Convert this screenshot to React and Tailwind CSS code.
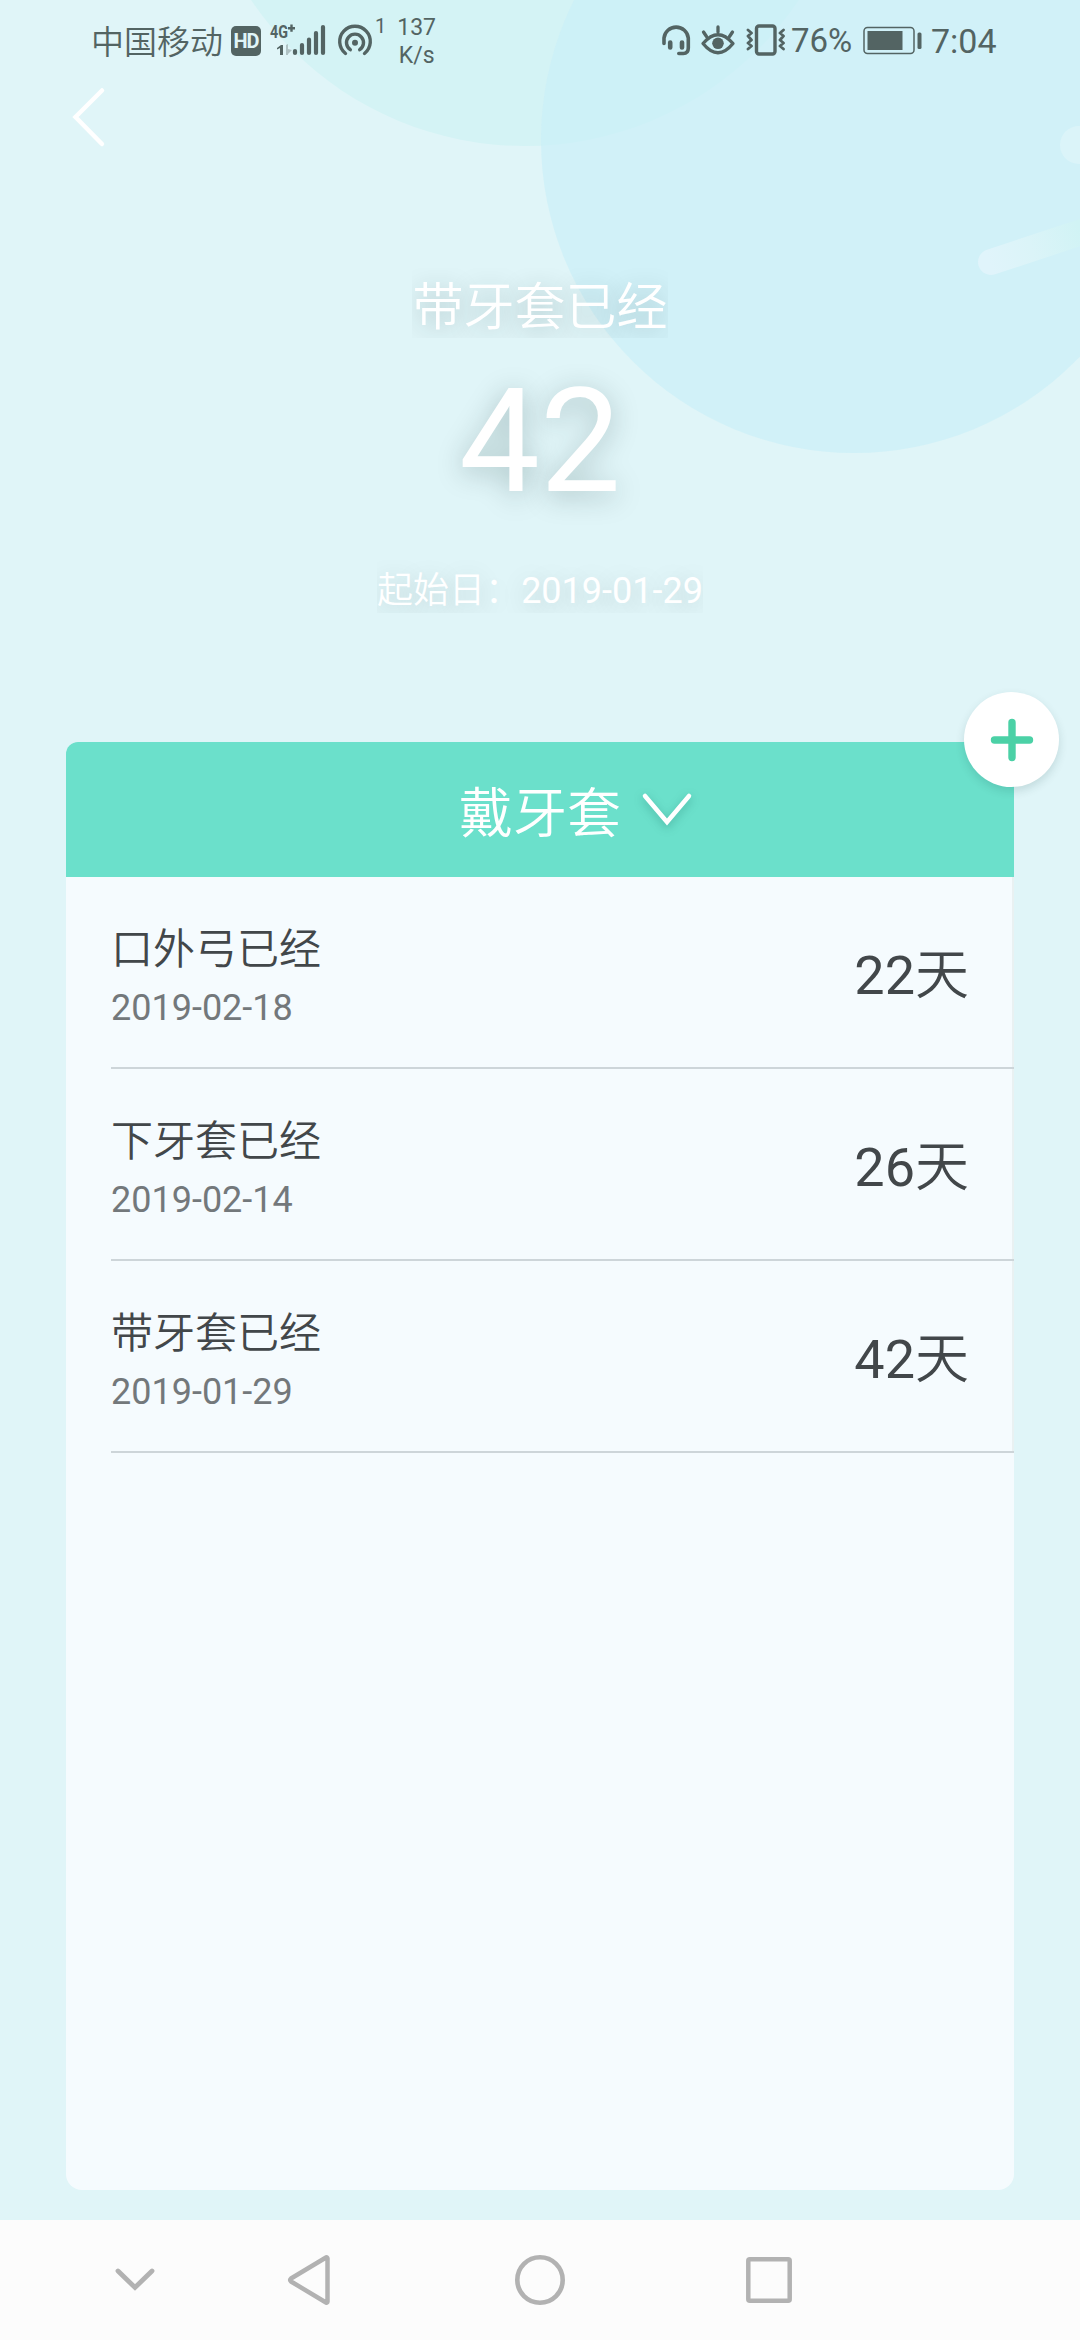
import React, { useState } from "react";

const records = [
  { id: 1, title: "口外弓已经", date: "2019-02-18", days: 22 },
  { id: 2, title: "下牙套已经", date: "2019-02-14", days: 26 },
  { id: 3, title: "带牙套已经", date: "2019-01-29", days: 42 },
];

function Background() {
  return (
    <svg className="absolute inset-0 -z-10" width="1080" height="700" viewBox="0 0 1080 700" fill="none">
      <defs>
        <linearGradient id="streak" gradientUnits="userSpaceOnUse" x1="989" y1="261" x2="1080" y2="230">
          <stop offset="0" stopColor="#e0f4fb" />
          <stop offset="0.45" stopColor="#dbf4f8" />
          <stop offset="1" stopColor="#d1f3f5" />
        </linearGradient>
      </defs>
      <circle cx="525" cy="-184" r="330" fill="#d4f3f5" />
      <circle cx="854" cy="140" r="313" fill="#caf0f8" fillOpacity="0.7" />
      <path d="M991 262L1100 226" stroke="url(#streak)" strokeWidth="26" strokeLinecap="round" />
      <circle cx="1079" cy="145" r="19" fill="#dbf4f9" />
    </svg>
  );
}

function StatusBar() {
  return (
    <div className="flex h-20 justify-between pl-[91px] pr-[83px] text-[#536463]">
      <div className="flex">
        <span className="pt-[19px] text-[33px] leading-[48px] font-[350]">中国移动</span>
        <span className="mt-[26px] ml-[8px] flex h-[30px] w-[30px] items-center justify-center rounded-[5px] bg-[#536463] text-[20px] leading-none font-bold tracking-[-1px] text-[#e0f5f8]">
          HD
        </span>
        <svg className="mt-[22px] ml-[8px]" width="58" height="36" viewBox="0 0 58 36" fill="currentColor">
          <text x="1" y="16" fontSize="18" fontWeight="700" textLength="18" lengthAdjust="spacingAndGlyphs">4G</text>
          <path d="M19 5h7v2.400h-7zM21.300 2.500h2.400v7.200h-2.400z" />
          <path d="M8 26l4-3h2v10h-3v-7l-3 1.500z" />
          <path d="M17 23l2-1v11h-2zM19 27l4 1-4 4z" opacity="0.35" />
          <path d="M26 29v2M33 23v8M40 17.500v13.500M47 11v20M54 5v26" stroke="currentColor" strokeWidth="4.200" strokeLinecap="round" />
        </svg>
        <svg className="mt-[23px] ml-[9px]" width="38" height="36" viewBox="0 0 38 36" fill="none" stroke="currentColor" strokeWidth="3.400" strokeLinecap="round">
          <path d="M9.500 30.500a15.300 15.300 0 1 1 19 0" />
          <path d="M14.300 26.700a8.500 8.500 0 1 1 9.400 0" />
          <circle cx="19" cy="19.700" r="3" fill="currentColor" stroke="none" />
        </svg>
        <span className="ml-[1px] pt-[14px] text-[20px] leading-6">1</span>
        <div className="ml-[11px] flex flex-col pt-[14px] text-center text-[23px] leading-[28px]">
          <span>137</span>
          <span>K/s</span>
        </div>
      </div>
      <div className="flex">
        <svg className="mt-[23px]" width="32" height="34" viewBox="0 0 32 34" fill="none" stroke="currentColor" strokeWidth="3.600" strokeLinecap="round">
          <path d="M4 20.500v-5.500a12.200 12 0 0 1 24.300 0v10q0 5.500-5 5.500h-4.500" />
          <path d="M10.200 19.500v5M22 19.500v5" strokeWidth="4.600" />
        </svg>
        <svg className="mt-[23px] ml-[8px]" width="36" height="34" viewBox="0 0 36 34" fill="none" stroke="currentColor" strokeWidth="3.300" strokeLinecap="round" strokeLinejoin="round">
          <path d="M3 20.500Q18 3 33 20.500Q18 39 3 20.500zM18 4v5M3.500 9l3 4.500M32.500 9l-3 4.500" />
          <circle cx="18" cy="20.300" r="5.800" fill="currentColor" stroke="none" />
        </svg>
        <svg className="mt-[22px] ml-[8px]" width="44" height="36" viewBox="0 0 44 36" fill="none" stroke="currentColor" strokeWidth="3.400" strokeLinejoin="round" strokeLinecap="round">
          <rect x="12.500" y="4" width="18.500" height="28" rx="2.500" />
          <path d="M4 8l3.500 3-3.500 3 3.500 4-3.500 3 3.500 3-3.500 3M39.500 8l-3.500 3 3.500 3-3.500 4 3.500 3-3.500 3 3.500 3" strokeWidth="2.800" />
        </svg>
        <span className="ml-[3px] w-[63px] pt-[17px] text-[33px] leading-[48px]">76%</span>
        <svg className="mt-[25px] ml-[7px]" width="62" height="32" viewBox="0 0 62 32" fill="currentColor">
          <rect x="3" y="2.500" width="50" height="26" rx="3.500" fill="none" stroke="currentColor" strokeWidth="1.500" />
          <rect x="6.500" y="6" width="35" height="19" />
          <rect x="56.500" y="7.500" width="4" height="16.500" rx="1.500" />
        </svg>
        <span className="ml-[8px] w-[66px] pt-[17px] text-[34px] leading-[48px]">7:04</span>
      </div>
    </div>
  );
}

function Record({ title, date, days }) {
  return (
    <li className="ml-[45px] flex h-[192px] items-center justify-between border-b-2 border-[#cdd5d9] pt-[12px] pr-[45px]">
      <div className="flex flex-col">
        <span className="text-[42px] leading-[60px] font-[350] text-[#42474a]">{title}</span>
        <span className="text-[36px] leading-[56px] text-[#73787b]">{date}</span>
      </div>
      <span className="pb-[4px] text-[54px] leading-[80px] font-normal text-[#42474a]">
        {days}
        <span className="font-[350]">天</span>
      </span>
    </li>
  );
}

function NavBar() {
  return (
    <div className="flex h-[120px] items-center bg-[#fcfcfc] pl-[110px]">
      <svg width="50" height="60" viewBox="0 0 50 60" fill="none" stroke="#b2b2b2" strokeWidth="4.800" strokeLinecap="round">
        <path d="M8 21L25 37.500L42 21" />
      </svg>
      <svg className="ml-[120px]" width="60" height="60" viewBox="0 0 60 60" fill="none" stroke="#b2b2b2" strokeWidth="4.500" strokeLinejoin="round">
        <path d="M47.500 8.500v43q0 1.500-1.500 1L11 31.500q-1.500-1.500 0-3L46 7.500q1.500-.5 1.500 1z" />
      </svg>
      <svg className="ml-[170px]" width="60" height="60" viewBox="0 0 60 60" fill="none" stroke="#b2b2b2" strokeWidth="4.600">
        <circle cx="30" cy="30" r="22.700" />
      </svg>
      <svg className="ml-[169px]" width="60" height="60" viewBox="0 0 60 60" fill="none" stroke="#b2b2b2" strokeWidth="4.500">
        <rect x="9.300" y="9.300" width="41.400" height="41.400" rx="1.500" />
      </svg>
    </div>
  );
}

function App() {
  const [open, setOpen] = useState(false);

  return (
    <div className="relative isolate flex h-[2340px] w-[1080px] flex-col overflow-hidden bg-[#e0f5f8] font-['Roboto','Noto_Sans_CJK_SC',sans-serif]">
      <Background />
      <StatusBar />
      <button className="ml-[70px] h-[74px] w-10">
        <svg width="40" height="74" viewBox="0 0 40 74" fill="none" stroke="#fff" strokeWidth="4.500" strokeLinecap="round">
          <path d="M32 10.500L5.500 37L32 64" />
        </svg>
      </button>

      <div className="flex h-[588px] flex-col items-center pt-[114px] text-white">
        <h1 className="h-[70px] overflow-hidden text-[51px] leading-[80px] font-[350] text-shadow-[0_5px_26px_rgb(0_40_40/0.24)]">
          带牙套已经
        </h1>
        <p className="mt-[19px] text-[144px] leading-[170px] text-shadow-[0_5px_28px_rgb(0_40_40/0.26)]">42</p>
        <p className="mt-[33px] h-[53px] overflow-hidden text-[36px] leading-[62px] text-shadow-[0_5px_26px_rgb(0_40_40/0.2)]">
          <span className="font-[350]">起始日：</span>2019-01-29
        </p>
      </div>

      <div className="relative mx-[66px] flex h-[1448px] flex-col rounded-t-xl rounded-b-2xl bg-[#f5fbfe]">
        <button
          className="flex h-[135px] items-center justify-center rounded-tl-xl bg-[#6be0cb] pl-[73px] text-[54px] leading-[80px] text-white"
          onClick={() => setOpen(!open)}
        >
          <span className="pt-[10px] font-[350]">戴牙套</span>
          <svg className="ml-[17px] drop-shadow-[0_3px_5px_rgb(0_80_70/0.3)]" width="56" height="44" viewBox="0 0 56 44" fill="none" stroke="#fff" strokeWidth="4.500" strokeLinecap="round">
            <path d="M7 8L29 34L51 8" />
          </svg>
        </button>
        <ul className="flex flex-col shadow-[inset_-2px_0_0_#e9f1f2]">
          {records.map((record) => (
            <Record key={record.id} title={record.title} date={record.date} days={record.days} />
          ))}
        </ul>
        <button className="absolute -top-[50px] -right-[45px] flex h-[95px] w-[95px] items-center justify-center rounded-full bg-white shadow-[0_4px_10px_rgb(0_60_60/0.14)]">
          <svg width="50" height="50" viewBox="0 0 50 50" stroke="#4bd1a6" strokeWidth="7.400" strokeLinecap="round">
            <path d="M25 7.500v35M7.500 25h35" />
          </svg>
        </button>
      </div>
      <div className="mt-auto">
        <NavBar />
      </div>
    </div>
  );
}

export default App;
